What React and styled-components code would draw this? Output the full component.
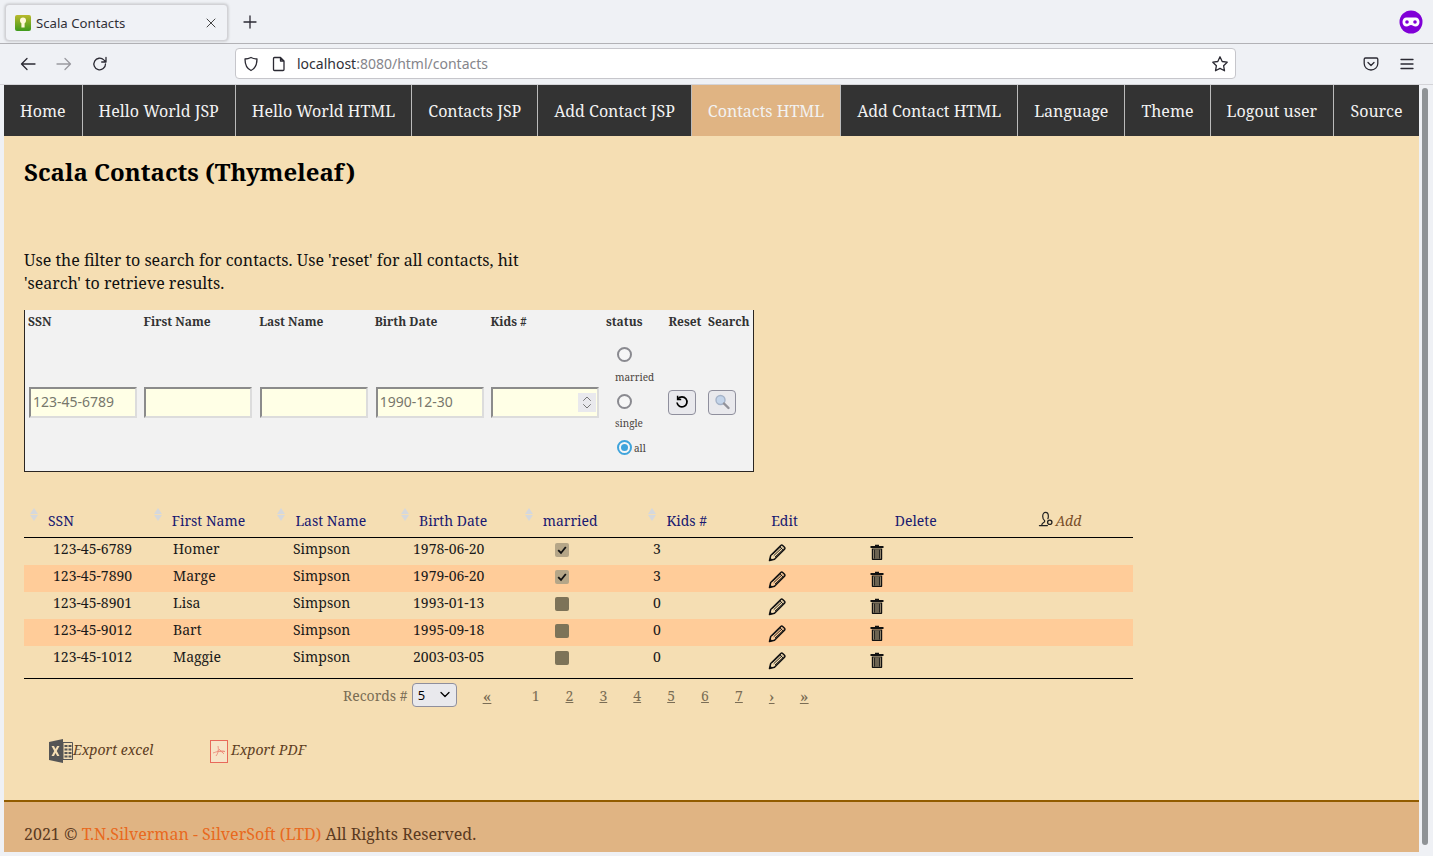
import styled, { createGlobalStyle } from "styled-components";

const SERIF = `"Noto Serif", "DejaVu Serif", serif`;
const SANS = `"Noto Sans", "Open Sans", sans-serif`;

const navItems = [
  "Home",
  "Hello World JSP",
  "Hello World HTML",
  "Contacts JSP",
  "Add Contact JSP",
  "Contacts HTML",
  "Add Contact HTML",
  "Language",
  "Theme",
  "Logout user",
  "Source",
];

const contacts = [
  ["123-45-6789", "Homer", "1978-06-20", true, 3],
  ["123-45-7890", "Marge", "1979-06-20", true, 3],
  ["123-45-8901", "Lisa", "1993-01-13", false, 0],
  ["123-45-9012", "Bart", "1995-09-18", false, 0],
  ["123-45-1012", "Maggie", "2003-03-05", false, 0],
];

const GlobalStyle = createGlobalStyle`
  html, body {
    margin: 0;
    padding: 0;
    height: 100%;
    overflow: hidden;
    background: #eff1f5;
  }
  * { box-sizing: border-box; }
`;

const Favicon = () => (
  <svg width="16" height="16" viewBox="0 0 16 16">
    <defs>
      <linearGradient id="fav" x1="0" y1="0" x2="0" y2="1">
        <stop offset="0" stopColor="#b9b92c" />
        <stop offset="1" stopColor="#3f9a1c" />
      </linearGradient>
    </defs>
    <rect width="16" height="16" rx="2" fill="url(#fav)" />
    <circle cx="8" cy="5.5" r="3" fill="#fff8d8" />
    <rect x="6.4" y="6" width="3.2" height="6.5" fill="#fff8d8" />
  </svg>
);

const MaskIcon = () => (
  <svg width="24" height="24" viewBox="0 0 24 24">
    <circle cx="12" cy="12" r="11.5" fill="#8000d7" />
    <path d="M7.5 7.5h9c2.4 0 4 2 4 4.5s-1.6 4.500-4 4.500c-2 0-3-1.500-4.500-1.500s-2.500 1.500-4.500 1.500c-2.400 0-4-2-4-4.500s1.600-4.500 4-4.500z" fill="#fff" />
    <circle cx="8" cy="12" r="1.800" fill="#8000d7" />
    <circle cx="16" cy="12" r="1.800" fill="#8000d7" />
  </svg>
);

const Stroke = styled.svg`
  fill: none;
  stroke: ${(p) => p.$color || "#2b2a33"};
  stroke-width: 1.3;
  stroke-linecap: round;
  stroke-linejoin: round;
  flex: none;
`;

const Pencil = () => (
  <svg width="18" height="18" viewBox="0 0 18 18">
    <path d="M1.500 16.500l1.200-5L12.800 1.500c.6-.6 1.300-.6 1.900 0l1.800 1.800c.6.6.6 1.300 0 1.900L6.500 15.300z" fill="none" stroke="#111" strokeWidth="1.500" strokeLinejoin="round" />
    <path d="M4.500 10.500L13 2.500M5.700 11.700L14.200 3.700M7 13L15.500 5M11.800 2.700l3.500 3.500" stroke="#111" strokeWidth="0.900" />
    <path d="M1.300 16.700l.8-3.300 2.500 2.500z" fill="#111" />
  </svg>
);

const Trash = () => (
  <svg width="14" height="16" viewBox="0 0 14 16">
    <path d="M5 2V.8h4V2h4.500v2H.5V2z" fill="#111" />
    <path d="M1.800 4.500h10.400V15c0 .6-.4 1-1 1H2.800c-.6 0-1-.4-1-1z" fill="#111" />
    <path d="M3.200 5.500h7.600V14.700H3.200z" fill="#f5deb3" />
    <path d="M4.300 5.500v9.200M6 5.500v9.200M8 5.500v9.200M9.700 5.500v9.200" stroke="#111" strokeWidth="1.200" />
  </svg>
);

const Browser = styled.div`
  display: flex;
  flex-direction: column;
  width: 1433px;
  height: 856px;
  font-family: ${SERIF};
`;

const TabStrip = styled.div`
  height: 44px;
  flex: none;
  display: flex;
  align-items: flex-start;
  padding: 4px 10px 0 5px;
  background: #eff1f5;
  border-bottom: 1px solid #b2b2b6;
`;

const Tab = styled.div`
  width: 223px;
  height: 37px;
  display: flex;
  align-items: center;
  gap: 5px;
  padding: 0 11px 0 9px;
  background: #f0f2f6;
  border-radius: 4px;
  border: 1px solid #d2d2d6;
  box-shadow: 0 0 3px rgba(0, 0, 0, 0.25);
  font: 13.2px ${SANS};
  color: #303036;
`;

const TabTitle = styled.span`
  flex: 1;
`;

const NewTab = styled.div`
  margin: 6px 0 0 14px;
  height: 24px;
  display: flex;
  align-items: center;
`;

const MaskSlot = styled.div`
  margin: 6px 0 0 auto;
`;

const Toolbar = styled.div`
  height: 41px;
  flex: none;
  display: flex;
  align-items: center;
  padding: 0 18px 1px 20px;
  background: #eff1f5;
  border-bottom: 1px solid #d4d4d8;
`;

const NavButtons = styled.div`
  display: flex;
  gap: 20px;
  align-items: center;
  width: 216px;
`;

const UrlBar = styled.div`
  width: 1001px;
  height: 31px;
  margin-left: -1px;
  display: flex;
  align-items: center;
  padding: 0 6px 0 7px;
  background: #fff;
  border: 1px solid #c6c6cb;
  border-radius: 4px;
  font: 14px ${SANS};
  color: #85858b;
`;

const PageIcon = styled(Stroke)`
  margin-left: 12px;
`;

const UrlText = styled.div`
  flex: 1;
  margin-left: 10px;
  b {
    font-weight: 400;
    color: #303036;
  }
`;

const ToolbarRight = styled.div`
  margin-left: auto;
  display: flex;
  align-items: center;
  gap: 20px;
`;

const Viewport = styled.div`
  flex: 1;
  min-height: 0;
  display: flex;
  padding: 0 0 4px 4px;
  background: #eff1f5;
`;

const Page = styled.div`
  width: 1415px;
  display: flex;
  flex-direction: column;
  background: #f5deb3;
`;

const ScrollTrack = styled.div`
  width: 14px;
  padding: 3px 5px 7px 3px;
  display: flex;
`;

const ScrollThumb = styled.div`
  flex: 1;
  background: #8f9396;
  border-radius: 3px;
`;

const Nav = styled.nav`
  height: 51px;
  flex: none;
  display: flex;
  background: #333;
`;

const NavItem = styled.a`
  flex: ${(p) => (p.$last ? "1" : "none")};
  display: flex;
  align-items: center;
  justify-content: center;
  padding: 0 16px;
  font-size: 16px;
  white-space: nowrap;
  color: #f2f2f2;
  background: ${(p) => (p.$active ? "#e0b483" : "transparent")};
  border-right: ${(p) => (p.$last ? "none" : "1px solid #bbb")};
`;

const Main = styled.main`
  flex: 1;
  padding: 0 20px;
  color: #111;
`;

const Title = styled.h1`
  margin: 21px 0 0;
  font-size: 24px;
  line-height: 29px;
  font-weight: 700;
  color: #000;
`;

const Intro = styled.p`
  width: 520px;
  margin: 63px 0 0;
  font-size: 16px;
  line-height: 23px;
`;

const Filter = styled.form`
  width: 730px;
  height: 162px;
  margin-top: 15px;
  padding: 3px 3px 0 3px;
  background: #f2f2f2;
  border: 1px solid #2b2622;
  border-top: none;
  display: grid;
  grid-template-columns: 115.6px 115.6px 115.6px 115.6px 115.6px 62.500px 39.500px 44px;
  grid-template-rows: 20px 1fr;
`;

const FilterLabel = styled.label`
  font-size: 12px;
  line-height: 17px;
  font-weight: 700;
  color: #333;
  white-space: nowrap;
`;

const FilterCell = styled.div`
  display: flex;
  align-items: center;
  padding-left: ${(p) => p.$pad || 0}px;
`;

const StatusCell = styled.div`
  display: flex;
  flex-direction: column;
  padding: 14px 0 0 11px;
`;

const TextInput = styled.input`
  width: 108px;
  height: 31px;
  padding: 0 2px 2px;
  background: #ffffe6;
  border: 2px solid;
  border-color: #8b8b8b #dcdcdc #dcdcdc #8b8b8b;
  font: 14px ${SANS};
  &::placeholder {
    color: #77776c;
    opacity: 1;
  }
`;

const NumberWrap = styled.div`
  position: relative;
  width: 108px;
`;

const Spinner = styled.div`
  position: absolute;
  top: 6px;
  right: 3px;
  width: 18px;
  height: 19px;
  background: #e9e9ed;
  display: flex;
  align-items: center;
  justify-content: center;
`;

const Radio = styled.span`
  width: 15px;
  height: 15px;
  flex: none;
  border-radius: 50%;
  border: ${(p) => (p.$checked ? "2px solid #3fa4dc" : "2px solid #8a8a90")};
  background: #f6f6f6;
  display: flex;
  align-items: center;
  justify-content: center;
  &::after {
    content: "";
    width: 7px;
    height: 7px;
    border-radius: 50%;
    background: ${(p) => (p.$checked ? "#3fa4dc" : "transparent")};
  }
`;

const RadioBlock = styled.div`
  display: flex;
  flex-direction: column;
  height: ${(p) => p.$height}px;
`;

const RadioLabel = styled.span`
  font-size: 10px;
  line-height: 15px;
  color: #4a4440;
  margin: ${(p) => p.$top}px 0 0 -2px;
`;

const RadioRow = styled.div`
  display: flex;
  align-items: center;
  gap: 2px;
  font-size: 10px;
  color: #4a4440;
`;

const IconButton = styled.button`
  width: 28px;
  height: 25px;
  padding: 0;
  display: flex;
  align-items: center;
  justify-content: center;
  background: #e9e9ed;
  border: 1px solid #8f8f9d;
  border-radius: 4px;
`;

const TableArea = styled.section`
  width: 1109px;
  margin-top: 36px;
`;

const HeadRow = styled.div`
  height: 30px;
  display: grid;
  grid-template-columns: repeat(8, 123.7px) 1fr;
  align-items: start;
  border-bottom: 1px solid #000;
`;

const HeadCell = styled.div`
  position: relative;
  height: 29px;
  padding: 3px 0 0 ${(p) => (p.$sortable ? 24 : 5)}px;
  font-size: 14px;
  line-height: 20px;
  color: #191970;
`;

const SortArrows = styled.span`
  position: absolute;
  left: 6px;
  top: 0;
  width: 0;
  height: 14px;
  &::before,
  &::after {
    content: "";
    position: absolute;
    left: 0;
    border-left: 4px solid transparent;
    border-right: 4px solid transparent;
  }
  &::before {
    top: 0;
    border-bottom: 6px solid #d5d8dc;
  }
  &::after {
    top: 7px;
    border-top: 6px solid #d5d8dc;
  }
`;

const AddCell = styled.div`
  display: flex;
  align-items: flex-start;
  gap: 2px;
  height: 29px;
  padding: 3px 0 0 24px;
  font-size: 14px;
  line-height: 20px;
  font-style: italic;
  color: #7a4f2a;
`;

const Row = styled.div`
  height: 27px;
  display: grid;
  grid-template-columns: 120px 120px 120px 120px 120px 116px 1fr;
  align-items: start;
  padding: 1px 0 0 29px;
  font-size: 14px;
  line-height: 20px;
  color: #1a1a1a;
  background: ${(p) => (p.$odd ? "#ffcc99" : "transparent")};
`;

const Check = styled.span`
  width: 14px;
  height: 14px;
  margin: 4px 0 0 22px;
  border-radius: 2px;
  background: ${(p) => (p.$checked ? "#b5a688" : "#7d7358")};
  display: flex;
  align-items: center;
  justify-content: center;
`;

const IconCell = styled.div`
  display: flex;
  gap: 84px;
  padding-top: 5px;
  margin-left: -1px;
`;

const TableEnd = styled.div`
  margin-top: 5px;
  border-top: 1px solid #000;
`;

const Pager = styled.div`
  display: flex;
  align-items: center;
  height: 32px;
  padding-left: 319px;
  font-size: 14px;
  color: #7a6d55;
`;

const SelectBox = styled.div`
  width: 45px;
  height: 24px;
  margin-left: 4px;
  padding: 0 6px 0 5px;
  display: flex;
  align-items: center;
  justify-content: space-between;
  background: #e9e9ed;
  border: 1px solid #8f8f9d;
  border-radius: 4px;
  font: 13px ${SANS};
  color: #000;
`;

const PageLink = styled.a`
  width: ${(p) => p.$width || 33.9}px;
  font-size: ${(p) => p.$size || 14}px;
  text-decoration: ${(p) => (p.$plain ? "none" : "underline")};
  color: #7a6d55;
`;

const PageFirst = styled(PageLink)`
  margin-left: 26px;
  margin-right: 39.5px;
`;

const Exports = styled.div`
  display: flex;
  align-items: center;
  height: 28px;
  margin-top: 24px;
  padding-left: 25px;
`;

const ExportLink = styled.a`
  display: flex;
  align-items: center;
  gap: ${(p) => p.$gap}px;
  width: ${(p) => p.$width}px;
  font-size: 14px;
  font-style: italic;
  color: #5f3e24;
  svg {
    margin-top: 4px;
  }
`;

const Footer = styled.footer`
  height: 52px;
  flex: none;
  padding: 21px 20px 0;
  font-size: 16px;
  line-height: 23px;
  background: #e0b483;
  border-top: 2px solid #925c00;
  color: #5b3a21;
  a {
    color: #e8691e;
  }
`;

const App = () => {
  return (
    <Browser>
      <GlobalStyle />
      <TabStrip>
        <Tab>
          <Favicon />
          <TabTitle>Scala Contacts</TabTitle>
          <Stroke width="10" height="10" viewBox="0 0 10 10" $color="#444"><path d="M1 1l8 8M9 1l-8 8" strokeWidth="1" /></Stroke>
        </Tab>
        <NewTab>
          <Stroke width="16" height="16" viewBox="0 0 16 16"><path d="M8 2v12M2 8h12" /></Stroke>
        </NewTab>
        <MaskSlot><MaskIcon /></MaskSlot>
      </TabStrip>
      <Toolbar>
        <NavButtons>
          <Stroke width="16" height="16" viewBox="0 0 16 16"><path d="M15 8H1.500M7 2.500L1.500 8 7 13.500" /></Stroke>
          <Stroke width="16" height="16" viewBox="0 0 16 16" $color="#9a9aa0"><path d="M1 8h13.500M9 2.500L14.500 8 9 13.500" /></Stroke>
          <Stroke width="16" height="16" viewBox="0 0 16 16"><path d="M13.500 8a5.800 5.800 0 1 1-1.700-4.100L14 6M14 1.500V6H9.700" /></Stroke>
        </NavButtons>
        <UrlBar>
          <Stroke width="16" height="16" viewBox="0 0 16 16"><path d="M8 1.500c2 1 4 1.500 6 1.500 0 5-1.500 9.500-6 11.500C3.500 12.500 2 8 2 3c2 0 4-.5 6-1.500z" /></Stroke>
          <PageIcon width="16" height="16" viewBox="0 0 16 16"><path d="M3.500 1.500h6l3.500 3.500v8.500c0 .6-.4 1-1 1h-8.500c-.6 0-1-.4-1-1v-11c0-.6.4-1 1-1zM9.500 1.500V5H13" /></PageIcon>
          <UrlText><b>localhost</b>:8080/html/contacts</UrlText>
          <Stroke width="18" height="18" viewBox="0 0 18 18"><path d="M9 1.800l2.200 4.700 5 .7-3.600 3.500.9 5.100L9 13.400l-4.500 2.400.9-5.100L1.800 7.200l5-.7z" /></Stroke>
        </UrlBar>
        <ToolbarRight>
          <Stroke width="16" height="16" viewBox="0 0 16 16"><path d="M2.500 2h11c.8 0 1.300.5 1.300 1.300v4.200c0 3.700-3 6.500-6.800 6.500s-6.800-2.800-6.800-6.500V3.300C1.200 2.500 1.700 2 2.500 2zM5 6.500l3 3 3-3" /></Stroke>
          <Stroke width="16" height="16" viewBox="0 0 16 16"><path d="M2 3.500h12M2 8h12M2 12.500h12" /></Stroke>
        </ToolbarRight>
      </Toolbar>
      <Viewport>
        <Page>
          <Nav>
            {navItems.map((label, i) => (
              <NavItem
                key={label}
                $active={label === "Contacts HTML"}
                $last={i === navItems.length - 1}
              >
                {label}
              </NavItem>
            ))}
          </Nav>
          <Main>
            <Title>Scala Contacts (Thymeleaf)</Title>
            <Intro>
              Use the filter to search for contacts. Use 'reset' for all contacts, hit
              'search' to retrieve results.
            </Intro>
            <Filter>
              {["SSN", "First Name", "Last Name", "Birth Date", "Kids #", "status", "Reset", "Search"].map((l) => (
                <FilterLabel key={l}>{l}</FilterLabel>
              ))}
              <FilterCell $pad={1}><TextInput placeholder="123-45-6789" /></FilterCell>
              <FilterCell><TextInput /></FilterCell>
              <FilterCell $pad={1}><TextInput /></FilterCell>
              <FilterCell $pad={1}><TextInput placeholder="1990-12-30" /></FilterCell>
              <FilterCell $pad={1}>
                <NumberWrap>
                  <TextInput />
                  <Spinner>
                    <Stroke width="10" height="15" viewBox="0 0 10 15" $color="#777"><path d="M1.500 5.500L5 2l3.500 3.500M1.500 9.500L5 13l3.500-3.500" strokeWidth="1" /></Stroke>
                  </Spinner>
                </NumberWrap>
              </FilterCell>
              <StatusCell>
                <RadioBlock $height={47}>
                  <Radio />
                  <RadioLabel $top={8}>married</RadioLabel>
                </RadioBlock>
                <RadioBlock $height={46}>
                  <Radio />
                  <RadioLabel $top={7}>single</RadioLabel>
                </RadioBlock>
                <RadioRow><Radio $checked />all</RadioRow>
              </StatusCell>
              <FilterCell>
                <IconButton type="button">
                  <svg width="14" height="14" viewBox="0 0 14 14" fill="none" stroke="#000" strokeWidth="1.700">
                    <path d="M3 3.800A5 5 0 1 1 2 7.500" />
                    <path d="M2.600 0.800V4.400H6.200" strokeWidth="1.500" />
                  </svg>
                </IconButton>
              </FilterCell>
              <FilterCell>
                <IconButton type="button">
                  <svg width="18" height="18" viewBox="0 0 18 18" fill="none">
                    <circle cx="7.500" cy="7" r="4.500" fill="#c3d4ea" stroke="#a5b3c8" strokeWidth="1.400" />
                    <path d="M11 10.500l4.500 4.500" stroke="#92929a" strokeWidth="2.400" strokeLinecap="round" />
                  </svg>
                </IconButton>
              </FilterCell>
            </Filter>
            <TableArea>
              <HeadRow>
                {["SSN", "First Name", "Last Name", "Birth Date", "married", "Kids #"].map((l) => (
                  <HeadCell key={l} $sortable><SortArrows />{l}</HeadCell>
                ))}
                <HeadCell>Edit</HeadCell>
                <HeadCell>Delete</HeadCell>
                <AddCell>
                  <Stroke width="16" height="16" viewBox="0 0 17 17" $color="#222" strokeWidth="1.100">
                    <path d="M4 15c0-2 2-2.500 3-3.500V10C5.500 9 5 7.500 5 5.500 5 3 6.500 1.500 8 1.500s3 1.500 3 4c0 1-.2 2-.5 2.700M1.500 15.500H10" />
                    <circle cx="12.500" cy="12" r="2.300" strokeWidth="1.400" />
                  </Stroke>
                  Add
                </AddCell>
              </HeadRow>
              {contacts.map(([ssn, first, birth, married, kids], i) => (
                <Row key={ssn} $odd={i % 2 === 1}>
                  <span>{ssn}</span>
                  <span>{first}</span>
                  <span>Simpson</span>
                  <span>{birth}</span>
                  <Check $checked={married}>
                    {married && (
                      <svg width="10" height="10" viewBox="0 0 10 10" fill="none" stroke="#111" strokeWidth="1.800">
                        <path d="M1.200 5.200L4 8l4.800-6" />
                      </svg>
                    )}
                  </Check>
                  <span>{kids}</span>
                  <IconCell>
                    <Pencil />
                    <Trash />
                  </IconCell>
                </Row>
              ))}
              <TableEnd />
            </TableArea>
            <Pager>
              Records #
              <SelectBox>
                5
                <Stroke width="10" height="8" viewBox="0 0 10 8" $color="#000" strokeWidth="1.600"><path d="M1 1.500L5 5.500l4-4" /></Stroke>
              </SelectBox>
              <PageFirst $width={9.500} $size={17}>«</PageFirst>
              {[1, 2, 3, 4, 5, 6, 7].map((n) => (
                <PageLink key={n} $plain={n === 1}>{n}</PageLink>
              ))}
              <PageLink $width={31} $size={17}>›</PageLink>
              <PageLink $size={17}>»</PageLink>
            </Pager>
            <Exports>
              <ExportLink $gap={0} $width={161}>
                <svg width="24" height="24" viewBox="0 0 24 24">
                  <path d="M0 3L14 0v24L0 21z" fill="#555" />
                  <path d="M2.500 7h2.500l1.500 3 1.600-3h2.400l-2.700 5 2.700 5H8.100l-1.600-3-1.500 3H2.500l2.700-5z" fill="#f5deb3" />
                  <path d="M14 3.500h9.500v17H14z" fill="none" stroke="#555" />
                  <path d="M15.500 6h3v2h-3zM19.500 6h3v2h-3zM15.500 9.500h3v2h-3zM19.500 9.500h3v2h-3zM15.500 13h3v2h-3zM19.500 13h3v2h-3zM15.500 16.500h3v2h-3zM19.500 16.500h3v2h-3z" fill="#555" />
                </svg>
                Export excel
              </ExportLink>
              <ExportLink $gap={3} $width={120}>
                <svg width="18" height="23" viewBox="0 0 18 23">
                  <rect x="0.500" y="0.500" width="17" height="22" fill="#f7e4c8" stroke="#e8695a" />
                  <path d="M3 13c3-1 8-3 12-1.500-3 .5-5 0-7.500-.5M8 6c.5 3 1 6-2 10M9 9l5 5" fill="none" stroke="#ec8a78" strokeWidth="0.900" />
                </svg>
                Export PDF
              </ExportLink>
            </Exports>
          </Main>
          <Footer>
            2021 © <a>T.N.Silverman - SilverSoft (LTD)</a> All Rights Reserved.
          </Footer>
        </Page>
        <ScrollTrack><ScrollThumb /></ScrollTrack>
      </Viewport>
    </Browser>
  );
};

export default App;
